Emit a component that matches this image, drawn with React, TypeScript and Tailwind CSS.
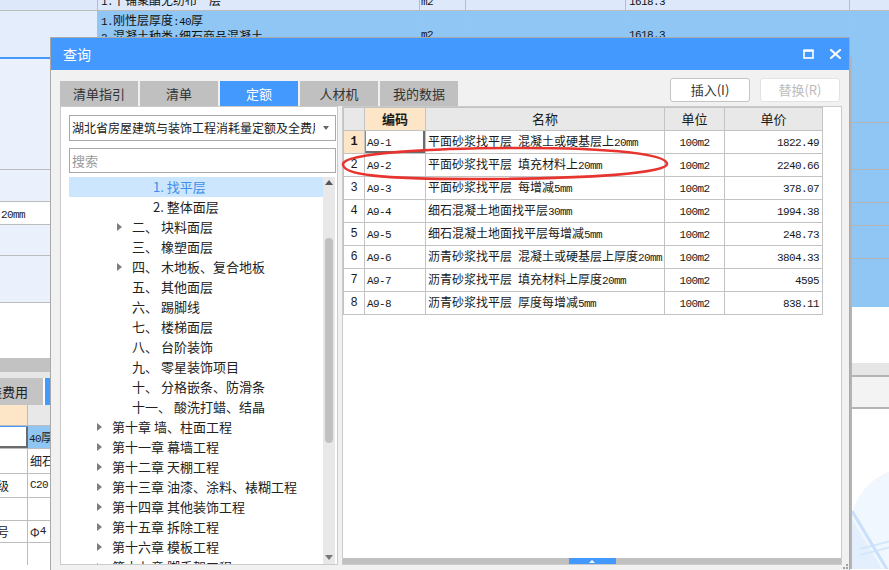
import React from "react"

const MONO = "font-[family-name:'Liberation_Mono','Noto_Sans_CJK_SC',monospace]"

// SimSun-like text: half-width runs in a narrow mono, CJK runs at 12px
function Sim({ text }: { text: string }) {
  const parts = text.split(/([\x00-\x7f]+)/).filter(Boolean)
  return (
    <>
      {parts.map((p, i) =>
        /^[\x00-\x7f]+$/.test(p)
          ? <span key={i} className={`text-[11px] tracking-[-0.6px] whitespace-pre ${MONO}`}>{p}</span>
          : <span key={i}>{p}</span>
      )}
    </>
  )
}

type TreeNode = { lvl: 1 | 2 | 3; arrow?: boolean; num?: string; name: string; sel?: boolean }

const TREE: TreeNode[] = [
  { lvl: 3, name: "1. 找平层", sel: true },
  { lvl: 3, name: "2. 整体面层" },
  { lvl: 2, arrow: true, num: "二、", name: "块料面层" },
  { lvl: 2, num: "三、", name: "橡塑面层" },
  { lvl: 2, arrow: true, num: "四、", name: "木地板、复合地板" },
  { lvl: 2, num: "五、", name: "其他面层" },
  { lvl: 2, num: "六、", name: "踢脚线" },
  { lvl: 2, num: "七、", name: "楼梯面层" },
  { lvl: 2, num: "八、", name: "台阶装饰" },
  { lvl: 2, num: "九、", name: "零星装饰项目" },
  { lvl: 2, num: "十、", name: "分格嵌条、防滑条" },
  { lvl: 2, num: "十一、", name: "酸洗打蜡、结晶" },
  { lvl: 1, arrow: true, num: "第十章", name: "墙、柱面工程" },
  { lvl: 1, arrow: true, num: "第十一章", name: "幕墙工程" },
  { lvl: 1, arrow: true, num: "第十二章", name: "天棚工程" },
  { lvl: 1, arrow: true, num: "第十三章", name: "油漆、涂料、裱糊工程" },
  { lvl: 1, arrow: true, num: "第十四章", name: "其他装饰工程" },
  { lvl: 1, arrow: true, num: "第十五章", name: "拆除工程" },
  { lvl: 1, arrow: true, num: "第十六章", name: "模板工程" },
  { lvl: 1, arrow: true, num: "第十七章", name: "脚手架工程" },
]

const ROWS = [
  { code: "A9-1", name: "平面砂浆找平层 混凝土或硬基层上20mm", price: "1822.49" },
  { code: "A9-2", name: "平面砂浆找平层 填充材料上20mm", price: "2240.66" },
  { code: "A9-3", name: "平面砂浆找平层 每增减5mm", price: "378.07" },
  { code: "A9-4", name: "细石混凝土地面找平层30mm", price: "1994.38" },
  { code: "A9-5", name: "细石混凝土地面找平层每增减5mm", price: "248.73" },
  { code: "A9-6", name: "沥青砂浆找平层 混凝土或硬基层上厚度20mm", price: "3804.33" },
  { code: "A9-7", name: "沥青砂浆找平层 填充材料上厚度20mm", price: "4595" },
  { code: "A9-8", name: "沥青砂浆找平层 厚度每增减5mm", price: "838.11" },
]

const TABS = ["清单指引", "清单", "定额", "人材机", "我的数据"]

function Arrow() {
  return <span className="w-0 h-0 border-y-[4px] border-y-transparent border-l-[5px] border-l-[#7d7d7d]" />
}

function TreeRow({ node }: { node: TreeNode }) {
  const pad = node.lvl === 1 ? "pl-[28px]" : node.lvl === 2 ? "pl-[48px]" : "pl-[84px]"
  return (
    <div className={`h-[20px] flex items-center text-[13px] whitespace-nowrap ${pad} ${node.sel ? "bg-[#cce6fd] text-[#3f8de8]" : "text-[#222]"}`}>
      {node.lvl !== 3 && <span className="w-[15px] flex items-center">{node.arrow && <Arrow />}</span>}
      {node.num ? <span>{node.num} {node.name}</span> : <span>{node.name}</span>}
    </div>
  )
}

function Background() {
  const cols = "grid grid-cols-[98px_322px_46px_160px_224px_39px]"
  return (
    <div className="absolute inset-0 text-[12px] text-[#111]">
      {/* top rows */}
      <div className={`${cols} h-[11px] bg-[#dde9fa] border-b border-[#bcbcbc] overflow-hidden`}>
        <div className="border-r border-[#bcbcbc]" />
        <div className="border-r border-[#bcbcbc] pl-[3px] leading-[14px] -mt-[7px] whitespace-nowrap"><Sim text="1.干铺聚酯无纺布一层" /></div>
        <div className="border-r border-[#bcbcbc] pl-[1px] leading-[14px] -mt-[7px]"><Sim text="m2" /></div>
        <div className="border-r border-[#bcbcbc]" />
        <div className="border-r border-[#bcbcbc] pl-[3px] leading-[14px] -mt-[7px]"><Sim text="1618.3" /></div>
        <div />
      </div>
      <div className={`${cols} h-[46px]`}>
        <div className="bg-[#e3edfb] border-r border-[#bcbcbc] flex justify-end items-start pt-[17px] pr-[8px] text-[#3b8be0] text-[14px] leading-none font-bold">...</div>
        <div className="bg-[#90c6f4] border-r border-[#bcbcbc] pl-[3px] pt-[2px] leading-[13px] whitespace-nowrap">
          <div><Sim text="1.刚性层厚度:40厚" /></div>
          <div><Sim text="2.混凝土种类:细石商品混凝土" /></div>
        </div>
        <div className="bg-[#90c6f4] border-r border-[#bcbcbc] pl-[1px] pt-[15px] leading-[13px]"><Sim text="m2" /></div>
        <div className="bg-[#90c6f4] border-r border-[#bcbcbc]" />
        <div className="bg-[#90c6f4] border-r border-[#bcbcbc] pl-[3px] pt-[15px] leading-[13px]"><Sim text="1618.3" /></div>
        <div className="bg-[#90c6f4]" />
      </div>
      <div className="flex">
        {/* left strip */}
        <div className="w-[50px] flex flex-col text-[#222]">
          <div className="h-[2px] bg-[#4499ff]" />
          <div className="h-[111px] bg-[#eaf1fd] border-b border-[#bcbcbc]" />
          <div className="h-[32px] bg-[#eaf1fd] border-b border-[#bcbcbc]" />
          <div className="h-[23px] bg-white border-b border-[#bcbcbc] pl-[1px] pt-[4px] leading-[13px]"><Sim text="20mm" /></div>
          <div className="h-[31px] bg-[#eaf1fd] border-b border-[#bcbcbc]" />
          <div className="h-[47px] bg-[#eaf1fd] border-b border-[#bcbcbc]" />
          <div className="h-[55px] bg-white" />
          <div className="h-[14px] bg-[#c2c2c2]" />
          <div className="h-[6px] bg-[#e6e6e6]" />
          <div className="h-[27px] flex">
            <div className="w-[43px] bg-[#c4c4c4] overflow-hidden flex justify-end items-center pr-[15px] text-[13px] whitespace-nowrap">安装费用</div>
            <div className="w-[2px] bg-white" />
            <div className="flex-1 bg-[#4499ff]" />
          </div>
          <div className="h-[21px] flex border-b border-[#bcbcbc]">
            <div className="w-[28px] bg-[#fde6c8] border-r border-[#bcbcbc]" />
            <div className="flex-1 bg-[#e8e8e8]" />
          </div>
          <div className="h-[22px] flex">
            <div className="w-[28px] bg-white border-t border-[#4499ff] shadow-[inset_-2px_-2px_0_#6b6b6b]" />
            <div className="flex-1 bg-[#90c6f4] pl-[1px] leading-[22px] whitespace-nowrap overflow-hidden"><Sim text="40厚" /></div>
          </div>
          {[["", "细石", 25], ["级", "C20", 24], ["", "", 23], ["号", "Φ4", 22], ["", "", 23]].map(([a, b, h], i) => (
            <div key={i} className="flex border-t border-[#bcbcbc]" style={{ height: h as number }}>
              <div className="w-[28px] border-r border-[#bcbcbc] flex items-center overflow-hidden whitespace-nowrap -indent-[3px]">{a}</div>
              <div className="flex-1 pl-[2px] flex items-center overflow-hidden whitespace-nowrap"><Sim text={b as string} /></div>
            </div>
          ))}
        </div>
        <div className="flex-1" />
        {/* right strip */}
        <div className="w-[39px] border-l-2 border-[#b4b4b4] flex flex-col">
          <div className="h-[66px] bg-[#90c6f4] border-b border-[#b4b4b4]" />
          <div className="h-[47px] bg-[#90c6f4] border-b border-[#b4b4b4]" />
          <div className="h-[33px] bg-[#90c6f4] border-b border-[#b4b4b4]" />
          <div className="h-[23px] bg-[#90c6f4] border-b border-[#b4b4b4]" />
          <div className="h-[33px] bg-[#90c6f4] border-b border-[#b4b4b4]" />
          <div className="h-[48px] bg-[#90c6f4]" />
          <div className="h-[56px] bg-white" />
          <div className="h-[14px] bg-[#e6e6e6] border-b-2 border-[#b4b4b4]" />
          <div className="h-[32px] bg-[#f3f3f3] border-b-2 border-[#b4b4b4]" />
          <div className="relative h-[160px] bg-white overflow-hidden">
            <svg className="absolute left-0 top-[40px]" width="39" height="125" viewBox="0 0 39 125">
              <circle cx="60" cy="80" r="62" fill="#f1f7fe" />
              <path d="M0 70 L30 120 L0 125 Z" fill="#e3effd" />
              <path d="M8 100 L39 92 M8 106 L39 98" stroke="#d5e7fb" strokeWidth="2" />
              <path d="M0 62 L36 122" stroke="#c9e0fa" strokeWidth="3" />
            </svg>
          </div>
        </div>
      </div>
    </div>
  )
}

function Dialog() {
  return (
    <div className="absolute left-[50px] top-[37px] w-[800px] h-[534px] border border-[#a9a9a9] bg-[#f1f1f1] flex flex-col">
      <div className="h-[32px] bg-[#4499ff] flex items-center justify-between pl-[12px] pr-[8px] shrink-0">
        <span className="text-white text-[14px]">查询</span>
        <div className="flex items-center gap-[16px]">
          <svg width="11" height="10" viewBox="0 0 11 10">
            <rect x="1" y="1.5" width="9" height="7.5" fill="none" stroke="white" strokeWidth="1.6" />
            <rect x="0.5" y="0.5" width="10" height="2.2" fill="white" />
          </svg>
          <svg width="11" height="10" viewBox="0 0 11 10">
            <path d="M1 1 L10 9 M10 1 L1 9" stroke="white" strokeWidth="2" strokeLinecap="square" />
          </svg>
        </div>
      </div>

      <div className="flex-1 pl-[9px] pr-[7px] pt-[8px] flex flex-col">
        <div className="flex items-start justify-between h-[28px]">
          <div className="flex gap-[2px] mt-[3px]">
            {TABS.map((t) => (
              <div key={t} className={`w-[78px] h-[25px] flex items-center justify-center text-[13px] ${t === "定额" ? "bg-[#4499ff] text-white" : "bg-[#c0c0c0] text-[#333]"}`}>
                {t}
              </div>
            ))}
          </div>
          <div className="flex gap-[10px] pr-[2px]">
            <div className="w-[80px] h-[24px] rounded-[3px] border border-[#c4c4c4] bg-white flex items-center justify-center text-[13px] text-[#333]">插入(I)</div>
            <div className="w-[80px] h-[24px] rounded-[3px] border border-[#e2e2e2] bg-white flex items-center justify-center text-[13px] text-[#bcbcbc]">替换(R)</div>
          </div>
        </div>

        <div className="flex gap-[4px] h-[459px]">
          {/* left panel */}
          <div className="w-[278px] bg-white border border-[#cbcbcb] pl-[8px] pt-[8px] flex flex-col">
            <div className="w-[267px] h-[26px] border border-[#a9a9a9] flex items-center pl-[2px] pr-[6px]">
              <div className="flex-1 overflow-hidden whitespace-nowrap text-[12px] text-[#222]">湖北省房屋建筑与装饰工程消耗量定额及全费用基价表</div>
              <span className="ml-[8px] w-0 h-0 border-x-[3.5px] border-x-transparent border-t-[4px] border-t-[#666]" />
            </div>
            <div className="w-[267px] h-[25px] mt-[7px] border border-[#a9a9a9] flex items-center pl-[2px] text-[13px] text-[#9a9a9a]">搜索</div>
            <div className="flex flex-1 mt-[4px] overflow-hidden">
              <div className="w-[254px] overflow-hidden">
                {TREE.map((n, i) => <TreeRow key={i} node={n} />)}
              </div>
              <div className="w-[12px] bg-[#e8e8e8] flex flex-col items-center">
                <span className="mt-[3px] w-0 h-0 border-x-[4px] border-x-transparent border-b-[5px] border-b-[#555]" />
                <div className="mt-[53px] w-[8px] h-[205px] rounded-full bg-[#c1c1c1]" />
                <div className="flex-1" />
                <span className="mb-[4px] w-0 h-0 border-x-[4px] border-x-transparent border-t-[5px] border-t-[#777]" />
              </div>
            </div>
          </div>

          {/* right panel */}
          <div className="relative w-[500px] bg-white border border-[#cbcbcb] flex flex-col">
            <table className="table-fixed border-collapse w-[479px] text-[12px] text-[#1a1a1a]">
              <colgroup>
                <col className="w-[21px]" />
                <col className="w-[61px]" />
                <col className="w-[239px]" />
                <col className="w-[60px]" />
                <col className="w-[98px]" />
              </colgroup>
              <thead>
                <tr className="h-[23px] text-[13px]">
                  <th className="border border-[#c3c3c3] bg-[#e8e8e8]" />
                  <th className="border border-[#c3c3c3] bg-[#fde6c8] font-bold">编码</th>
                  <th className="border border-[#c3c3c3] bg-[#e8e8e8] font-normal">名称</th>
                  <th className="border border-[#c3c3c3] bg-[#e8e8e8] font-normal">单位</th>
                  <th className="border border-[#c3c3c3] bg-[#e8e8e8] font-normal">单价</th>
                </tr>
              </thead>
              <tbody className="text-[12px]">
                {ROWS.map((r, i) => (
                  <tr key={r.code} className="h-[23px]">
                    <td className={`border border-[#c3c3c3] text-center text-[12px] ${MONO} ${i === 0 ? "bg-[#fde6c8] font-bold" : ""}`}>{i + 1}</td>
                    <td className={`border border-[#c3c3c3] pl-[2px] ${i === 0 ? "shadow-[inset_1px_0_0_#4499ff,inset_-2px_-2px_0_#6b6b6b]" : ""}`}><Sim text={r.code} /></td>
                    <td className="border border-[#c3c3c3] pl-[2px] whitespace-nowrap overflow-hidden"><Sim text={r.name} /></td>
                    <td className="border border-[#c3c3c3] text-center"><Sim text="100m2" /></td>
                    <td className="border border-[#c3c3c3] text-right pr-[3px]"><Sim text={r.price} /></td>
                  </tr>
                ))}
              </tbody>
            </table>
            <div className="flex-1" />
            <div className="h-[6px] bg-[#c0c0c0] flex justify-center">
              <div className="w-[47px] h-full bg-[#4499ff] flex items-center justify-center">
                <span className="w-0 h-0 border-x-[3px] border-x-transparent border-b-[3px] border-b-white" />
              </div>
            </div>
            <svg className="absolute left-[-3px] top-[31px] pointer-events-none" width="330" height="44" viewBox="338 136 330 44">
              <path
                d="M341 162 C343 151 430 146 520 146 C610 146 665 152 665 162 C665 171 590 177 470 177 C380 177 340 173 341 162 Z"
                fill="none" stroke="#e8342f" strokeWidth="2.6"
              />
            </svg>
          </div>
        </div>
      </div>
      <div className="absolute right-[1px] bottom-[1px] grid grid-cols-2 gap-[1px]">
        <span />
        <span className="w-[2px] h-[2px] bg-[#a0a0a0]" />
        <span className="w-[2px] h-[2px] bg-[#a0a0a0]" />
        <span className="w-[2px] h-[2px] bg-[#a0a0a0]" />
      </div>
    </div>
  )
}

export default function App() {
  return (
    <div className="relative w-[889px] h-[570px] overflow-hidden bg-white font-[family-name:'Noto_Sans_CJK_SC',sans-serif]">
      <Background />
      <Dialog />
    </div>
  )
}
